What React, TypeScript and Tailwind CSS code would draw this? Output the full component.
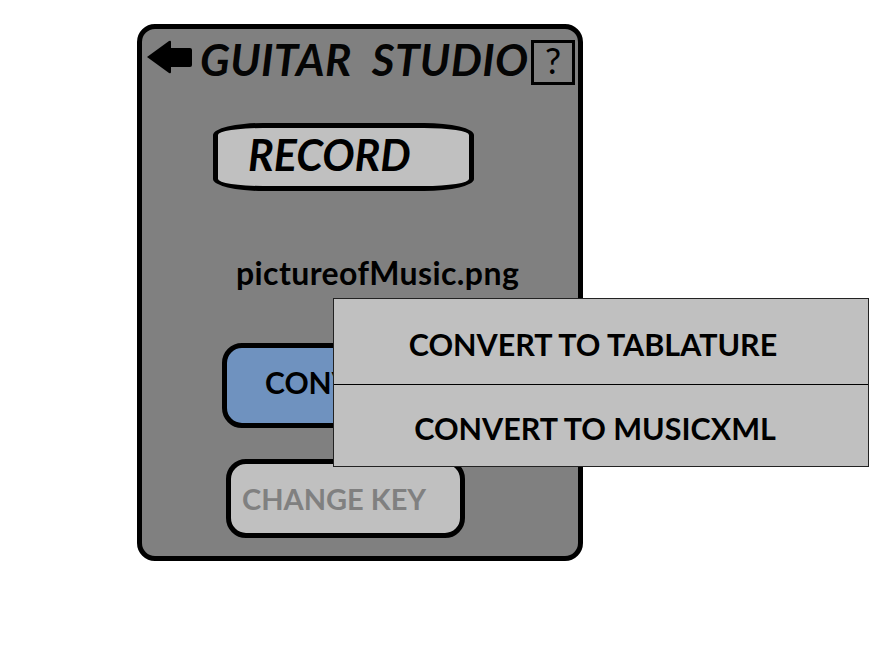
const font = "font-['Lato','Liberation_Sans',sans-serif]";

function BackArrow() {
  return (
    <svg width="48" height="36" viewBox="0 0 48 36" className="shrink-0">
      <path d="M1 18 L23 2 Q25 1 25 3 V9 H44 Q46 9 46 11 V26 Q46 28 44 28 H25 V33 Q25 35 23 34 Z" fill="#000" />
    </svg>
  );
}

export default function App() {
  return (
    <div className={`relative w-[877px] h-[648px] bg-white overflow-hidden text-black ${font}`}>
      <div className="pt-[24px] pl-[137px]">
        <div className="w-[446px] h-[537px] bg-[#808080] border-[5px] border-black rounded-[18px] flex flex-col">
          <div className="flex items-start pt-[10px] pl-[4px]">
            <BackArrow />
            <div className="ml-[6px] mt-[-5px] w-[330px] text-[44px] tracking-[0.4px] leading-[50px] font-bold italic whitespace-pre text-[#050505]">
              GUITAR  STUDIO
            </div>
            <div className="mt-[1px] ml-[1px] w-[44px] h-[45px] border-[3px] border-black flex items-center justify-center pb-[5px] text-[36px] leading-none">
              ?
            </div>
          </div>
          <div className="ml-[71px] mt-[38px] w-[261px] h-[68px] border-[5px] border-black rounded-[50px/12px] bg-[#c0c0c0] pl-[30px] text-[43px] leading-[54px] font-bold italic">
            RECORD
          </div>
          <div className="ml-[94px] mt-[62px] text-[32px] tracking-[0.4px] leading-[40px] font-bold whitespace-nowrap">
            pictureofMusic.png
          </div>
          <div className="ml-[80px] mt-[50px] w-[250px] h-[85px] border-[5px] border-black rounded-[20px] bg-[#6f92bf] pl-[38px] text-[30px] leading-[68px] font-bold whitespace-nowrap overflow-hidden">
            CONVERT
          </div>
          <div className="ml-[84px] mt-[31px] w-[239px] h-[79px] border-[5px] border-black rounded-[20px] bg-[#c0c0c0] pl-[11px] text-[29px] leading-[70px] font-bold text-[#808080] whitespace-nowrap">
            CHANGE KEY
          </div>
        </div>
      </div>

      <div className="absolute left-[333px] top-[298px] w-[536px] h-[169px] bg-[#c0c0c0] border border-[#222] flex flex-col text-[30.5px] font-bold">
        <div className="h-[86px] border-b border-black flex items-center justify-center pt-[6px] pr-[16px] whitespace-nowrap">
          CONVERT TO TABLATURE
        </div>
        <div className="flex-1 flex items-center justify-center pt-[6px] pr-[12px] whitespace-nowrap">
          CONVERT TO MUSICXML
        </div>
      </div>
    </div>
  );
}
